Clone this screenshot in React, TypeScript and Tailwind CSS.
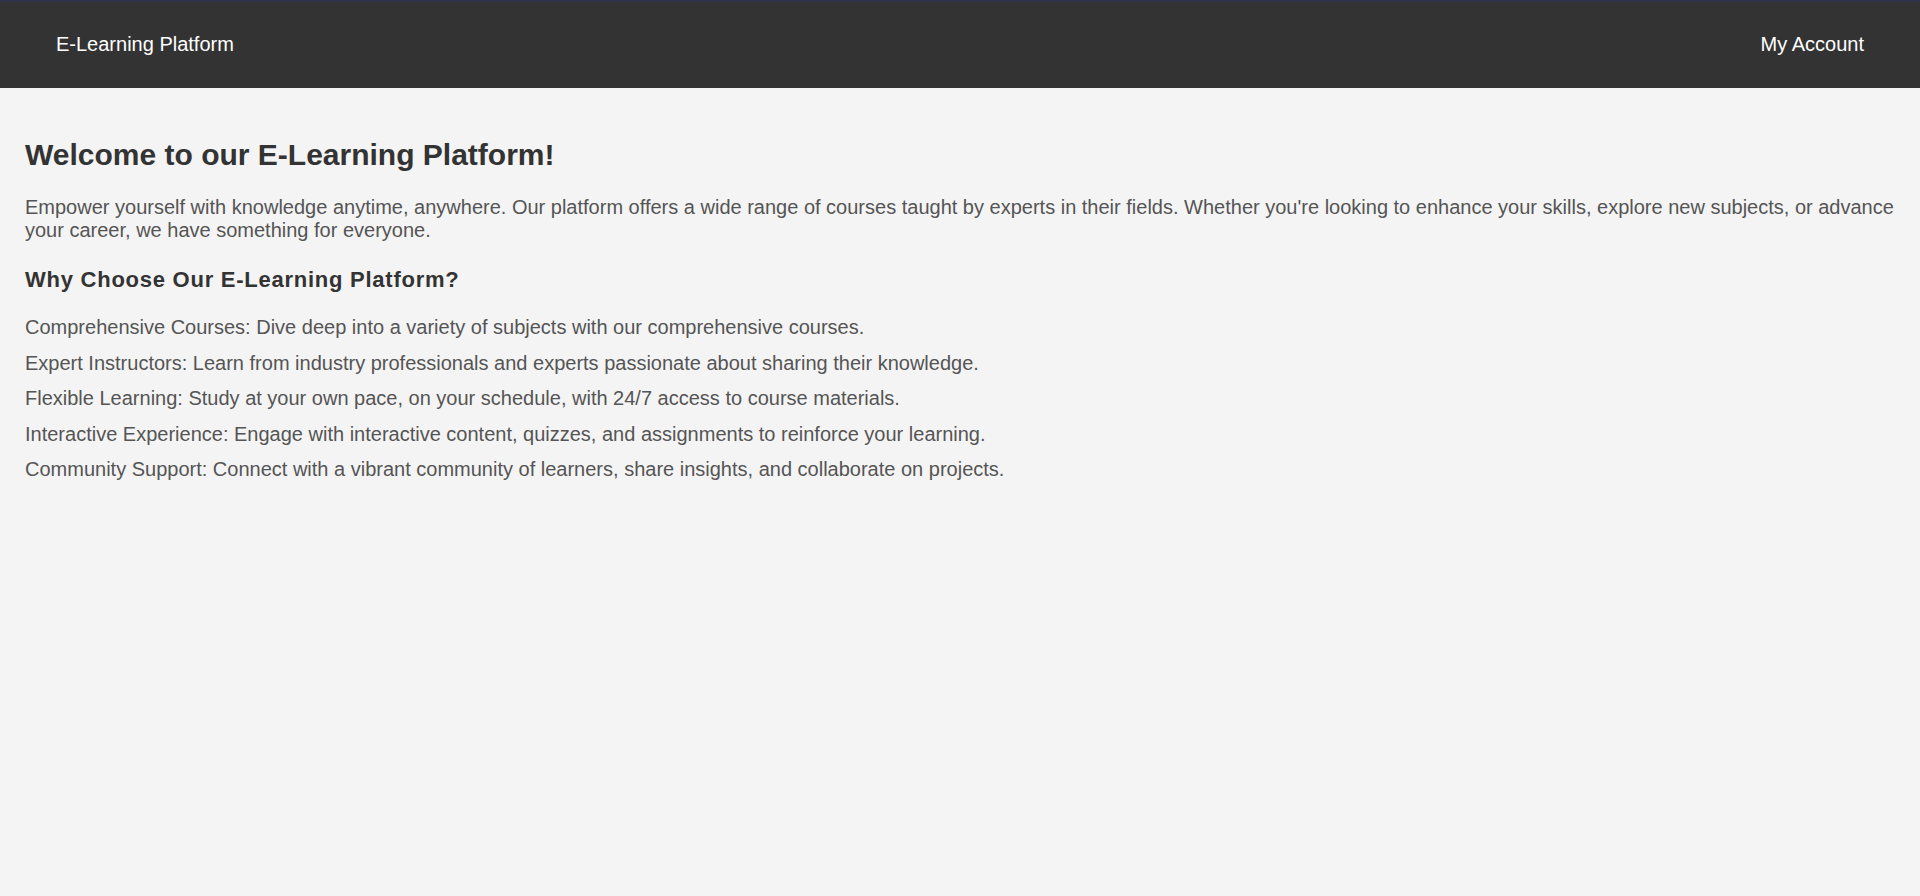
const features = [
  'Comprehensive Courses: Dive deep into a variety of subjects with our comprehensive courses.',
  'Expert Instructors: Learn from industry professionals and experts passionate about sharing their knowledge.',
  'Flexible Learning: Study at your own pace, on your schedule, with 24/7 access to course materials.',
  'Interactive Experience: Engage with interactive content, quizzes, and assignments to reinforce your learning.',
  'Community Support: Connect with a vibrant community of learners, share insights, and collaborate on projects.',
];

export default function App() {
  return (
    <div className="min-h-screen bg-[#f4f4f4] font-['Liberation_Sans',Arial,sans-serif]">
      {/* barra superior */}
      <header className="h-[88px] bg-[#333333] border-t-2 border-[#30324a] flex items-center justify-between px-[56px] pb-[2px] text-white text-[20px]">
        <span>E-Learning Platform</span>
        <span>My Account</span>
      </header>

      <main className="pl-[25px] pr-[20px] pt-[50px]">
        <h1 className="text-[30px] leading-[34px] font-bold text-[#333333]">Welcome to our E-Learning Platform!</h1>
        <p className="mt-[24px] text-[20px] leading-[23px] text-[#555555]">
          Empower yourself with knowledge anytime, anywhere. Our platform offers a wide range of courses taught by experts in their fields. Whether you're looking to enhance your skills, explore new subjects, or advance your career, we have something for everyone.
        </p>
        <h2 className="mt-[25px] text-[22px] leading-[26px] font-bold tracking-[0.75px] text-[#333333]">Why Choose Our E-Learning Platform?</h2>
        <ul className="mt-[17px] flex flex-col text-[20px] leading-[35.5px] text-[#555555]">
          {features.map(f => (
            <li key={f}>{f}</li>
          ))}
        </ul>
      </main>
    </div>
  );
}
